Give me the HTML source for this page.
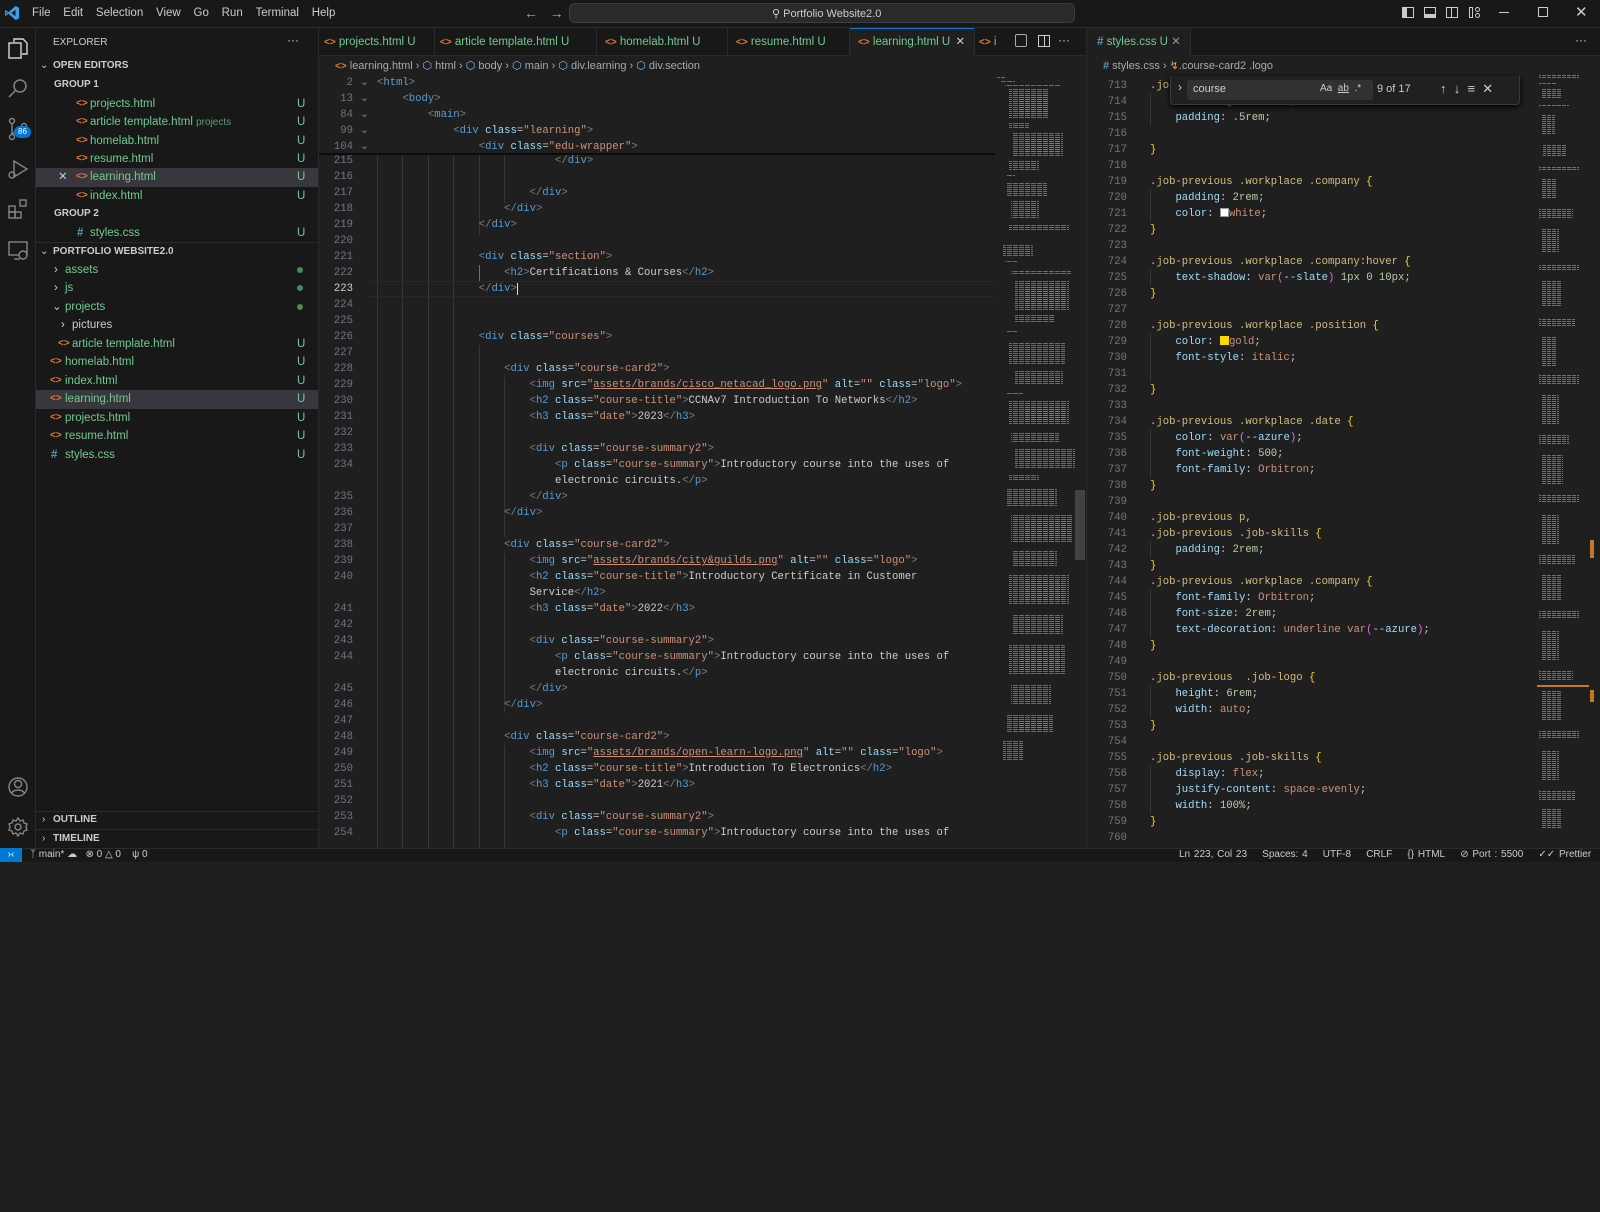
<!DOCTYPE html>
<html><head><meta charset="utf-8"><style>
*{box-sizing:border-box;margin:0;padding:0}
body{width:1600px;height:862px;overflow:hidden;background:#1f1f1f;font-family:"Liberation Sans",sans-serif;color:#ccc;position:relative}
.abs{position:absolute}
.ui{font-size:11.5px;white-space:nowrap}
.mono{font-family:"Liberation Mono",monospace;font-size:10.6px;white-space:pre}
.ln{position:absolute;height:16px;line-height:16px}
.num{position:absolute;text-align:right;color:#6e7681;width:40px}
.t{color:#569cd6}.b{color:#808080}.a{color:#9cdcfe}.s{color:#ce9178}.x{color:#cccccc}
.sel{color:#d7ba7d}.p{color:#9cdcfe}.v{color:#ce9178}.n{color:#b5cea8}.y{color:#ffd700}.pu{color:#da70d6}
.u{text-decoration:underline}
.g{color:#73c991}.fi{color:#e37933;font-weight:bold;font-size:10px}
.css{color:#519aba;font-weight:bold}
.row{position:absolute;left:36px;width:282px;height:18px;line-height:18px}
.hd{font-weight:bold;font-size:10px;color:#ccc}
.guide{position:absolute;width:1px;background:#363636}
.tab{position:absolute;top:0;height:28px;border-right:1px solid #2b2b2b;line-height:28px;overflow:hidden}
</style></head><body>

<!-- title bar -->
<div class="abs" style="left:0;top:0;width:1600px;height:28px;background:#181818;border-bottom:1px solid #2b2b2b"></div>
<svg class="abs" style="left:4px;top:5px" width="16" height="16" viewBox="0 0 16 16"><path d="M11.5 1 L15 2.6 V13.4 L11.5 15 L4.5 8.8 L1.8 10.9 L1 10.5 V5.5 L1.8 5.1 L4.5 7.2 Z M11.5 4.8 L7.4 8 L11.5 11.2 Z M2.3 6.8 V9.2 L3.6 8 Z" fill="#3c9ee8"/></svg>
<div class="abs ui" style="left:32px;top:7px;font-size:11.5px;color:#ccc">File&nbsp;&nbsp;&nbsp;&nbsp;Edit&nbsp;&nbsp;&nbsp;&nbsp;Selection&nbsp;&nbsp;&nbsp;&nbsp;View&nbsp;&nbsp;&nbsp;&nbsp;Go&nbsp;&nbsp;&nbsp;&nbsp;Run&nbsp;&nbsp;&nbsp;&nbsp;Terminal&nbsp;&nbsp;&nbsp;&nbsp;Help</div>
<div class="abs" style="left:524px;top:5px;color:#aaa;font-size:14px">&#8592;&nbsp;&nbsp;&nbsp;&#8594;</div>
<div class="abs" style="left:569px;top:3px;width:506px;height:20px;background:#2a2a2a;border:1px solid #3c3c3c;border-radius:6px"></div>
<div class="abs ui" style="left:772px;top:7px;font-size:11px;color:#ccc">&#9906; Portfolio Website2.0</div>
<div class="abs" style="left:1402px;top:7px;width:12px;height:11px;border:1px solid #ccc"></div>
<div class="abs" style="left:1402px;top:7px;width:5px;height:11px;background:#ccc"></div>
<div class="abs" style="left:1424px;top:7px;width:12px;height:11px;border:1px solid #ccc;border-bottom-width:4px"></div>
<div class="abs" style="left:1446px;top:7px;width:12px;height:11px;border:1px solid #ccc"></div>
<div class="abs" style="left:1451px;top:7px;width:1px;height:11px;background:#ccc"></div>
<div class="abs" style="left:1469px;top:7px;width:4px;height:11px;border:1px solid #ccc"></div>
<div class="abs" style="left:1475px;top:7px;width:5px;height:5px;border:1px solid #ccc;border-radius:3px"></div>
<div class="abs" style="left:1475px;top:13px;width:5px;height:5px;border:1px solid #ccc;border-radius:3px"></div>
<div class="abs" style="left:1499px;top:12px;width:10px;height:1px;background:#ccc"></div>
<div class="abs" style="left:1538px;top:7px;width:10px;height:10px;border:1px solid #ccc"></div>
<div class="abs" style="left:1575px;top:3px;color:#ccc;font-size:15px">&#10005;</div>

<!-- activity bar -->
<div class="abs" style="left:0;top:28px;width:36px;height:820px;background:#181818;border-right:1px solid #2b2b2b"></div>
<svg class="abs" style="left:6px;top:36px" width="24" height="24" viewBox="0 0 24 24" fill="none" stroke="#d7d7d7" stroke-width="1.4"><path d="M8 6V3h9l4 4v11h-5"/><rect x="3" y="7" width="12" height="15"/></svg>
<svg class="abs" style="left:6px;top:77px" width="24" height="24" viewBox="0 0 24 24" fill="none" stroke="#858585" stroke-width="1.5"><circle cx="14" cy="9" r="6"/><path d="M10 13L3 20"/></svg>
<svg class="abs" style="left:6px;top:117px" width="24" height="24" viewBox="0 0 24 24" fill="none" stroke="#858585" stroke-width="1.4"><circle cx="6" cy="4" r="2.5"/><circle cx="6" cy="20" r="2.5"/><circle cx="18" cy="9" r="2.5"/><path d="M6 6.5v11M18 11.5c0 4-12 3-12 6"/></svg>
<div class="abs" style="left:14px;top:126px;width:17px;height:12px;border-radius:7px;background:#0078d4;color:#fff;font-size:8px;text-align:center;line-height:12px">86</div>
<svg class="abs" style="left:6px;top:157px" width="24" height="24" viewBox="0 0 24 24" fill="none" stroke="#858585" stroke-width="1.4"><path d="M8 4l13 8-13 8z"/><circle cx="6" cy="18" r="3"/></svg>
<svg class="abs" style="left:6px;top:197px" width="24" height="24" viewBox="0 0 24 24" fill="none" stroke="#858585" stroke-width="1.4"><rect x="3" y="9" width="6" height="6"/><rect x="3" y="15" width="6" height="6"/><rect x="9" y="15" width="6" height="6"/><rect x="14" y="3" width="6" height="6"/></svg>
<svg class="abs" style="left:6px;top:238px" width="24" height="24" viewBox="0 0 24 24" fill="none" stroke="#858585" stroke-width="1.4"><rect x="3" y="4" width="18" height="13"/><path d="M8 21h6"/><circle cx="17" cy="17" r="4" fill="#181818"/></svg>
<svg class="abs" style="left:6px;top:775px" width="24" height="24" viewBox="0 0 24 24" fill="none" stroke="#858585" stroke-width="1.4"><circle cx="12" cy="12" r="9"/><circle cx="12" cy="9" r="3.5"/><path d="M5.5 18c3-4 10-4 13 0"/></svg>
<svg class="abs" style="left:6px;top:815px" width="24" height="24" viewBox="0 0 24 24" fill="none" stroke="#858585" stroke-width="1.4"><circle cx="12" cy="12" r="3"/><path d="M12 3l2 3 3-1 1 3 3 1-1 3 1 3-3 1-1 3-3-1-2 3-2-3-3 1-1-3-3-1 1-3-1-3 3-1 1-3 3 1z"/></svg>

<!-- sidebar -->
<div class="abs" style="left:36px;top:28px;width:283px;height:820px;background:#181818;border-right:1px solid #2b2b2b"></div>
<div class="abs ui" style="left:53px;top:37px;font-size:10px;color:#ccc">EXPLORER</div>
<div class="abs" style="left:287px;top:33px;color:#ccc;font-size:12px">&middot;&middot;&middot;</div>
<div class="row ui hd" style="top:57px"><span style="position:absolute;left:4px;font-weight:normal">&#8964;</span><span style="position:absolute;left:17px">OPEN EDITORS</span></div>
<div class="row ui hd" style="top:76px"><span style="position:absolute;left:18px">GROUP 1</span></div>
<div class="row ui" style="top:95px"><span class="fi abs" style="left:40px">&lt;&gt;</span><span class="g abs" style="left:54px">projects.html</span><span class="g abs" style="left:261px">U</span></div>
<div class="row ui" style="top:113px"><span class="fi abs" style="left:40px">&lt;&gt;</span><span class="g abs" style="left:54px">article template.html <span style="font-size:10px;color:#5c9d6f">projects</span></span><span class="g abs" style="left:261px">U</span></div>
<div class="row ui" style="top:132px"><span class="fi abs" style="left:40px">&lt;&gt;</span><span class="g abs" style="left:54px">homelab.html</span><span class="g abs" style="left:261px">U</span></div>
<div class="row ui" style="top:150px"><span class="fi abs" style="left:40px">&lt;&gt;</span><span class="g abs" style="left:54px">resume.html</span><span class="g abs" style="left:261px">U</span></div>
<div class="row ui" style="top:168px;background:#37373d;height:19px"><span class="abs" style="left:22px;color:#ccc">&#10005;</span><span class="fi abs" style="left:40px">&lt;&gt;</span><span class="g abs" style="left:54px">learning.html</span><span class="g abs" style="left:261px">U</span></div>
<div class="row ui" style="top:187px"><span class="fi abs" style="left:40px">&lt;&gt;</span><span class="g abs" style="left:54px">index.html</span><span class="g abs" style="left:261px">U</span></div>
<div class="row ui hd" style="top:205px"><span style="position:absolute;left:18px">GROUP 2</span></div>
<div class="row ui" style="top:224px"><span class="css abs" style="left:41px">#</span><span class="g abs" style="left:54px">styles.css</span><span class="g abs" style="left:261px">U</span></div>
<div class="abs" style="left:36px;top:242px;width:282px;height:1px;background:#2b2b2b"></div>
<div class="row ui hd" style="top:243px"><span style="position:absolute;left:4px;font-weight:normal">&#8964;</span><span style="position:absolute;left:17px">PORTFOLIO WEBSITE2.0</span></div>
<div class="row ui" style="top:261px"><span class="abs" style="left:18px">&#8250;</span><span class="g abs" style="left:29px">assets</span><span class="abs" style="left:261px;top:6px;width:6px;height:6px;border-radius:3px;background:#4b8a5a"></span></div>
<div class="row ui" style="top:279px"><span class="abs" style="left:18px">&#8250;</span><span class="g abs" style="left:29px">js</span><span class="abs" style="left:261px;top:6px;width:6px;height:6px;border-radius:3px;background:#4b8a5a"></span></div>
<div class="row ui" style="top:298px"><span class="abs" style="left:16px">&#8964;</span><span class="g abs" style="left:29px">projects</span><span class="abs" style="left:261px;top:6px;width:6px;height:6px;border-radius:3px;background:#4b8a5a"></span></div>
<div class="row ui" style="top:316px"><span class="abs" style="left:25px">&#8250;</span><span class="abs" style="left:36px;color:#ccc">pictures</span></div>
<div class="row ui" style="top:335px"><span class="fi abs" style="left:22px">&lt;&gt;</span><span class="g abs" style="left:36px">article template.html</span><span class="g abs" style="left:261px">U</span></div>
<div class="row ui" style="top:353px"><span class="fi abs" style="left:14px">&lt;&gt;</span><span class="g abs" style="left:29px">homelab.html</span><span class="g abs" style="left:261px">U</span></div>
<div class="row ui" style="top:372px"><span class="fi abs" style="left:14px">&lt;&gt;</span><span class="g abs" style="left:29px">index.html</span><span class="g abs" style="left:261px">U</span></div>
<div class="row ui" style="top:390px;background:#37373d;height:19px"><span class="fi abs" style="left:14px">&lt;&gt;</span><span class="g abs" style="left:29px">learning.html</span><span class="g abs" style="left:261px">U</span></div>
<div class="row ui" style="top:409px"><span class="fi abs" style="left:14px">&lt;&gt;</span><span class="g abs" style="left:29px">projects.html</span><span class="g abs" style="left:261px">U</span></div>
<div class="row ui" style="top:427px"><span class="fi abs" style="left:14px">&lt;&gt;</span><span class="g abs" style="left:29px">resume.html</span><span class="g abs" style="left:261px">U</span></div>
<div class="row ui" style="top:446px"><span class="css abs" style="left:15px">#</span><span class="g abs" style="left:29px">styles.css</span><span class="g abs" style="left:261px">U</span></div>
<div class="abs" style="left:36px;top:811px;width:282px;height:1px;background:#2b2b2b"></div>
<div class="row ui hd" style="top:811px"><span style="position:absolute;left:6px;font-weight:normal">&#8250;</span><span style="position:absolute;left:17px">OUTLINE</span></div>
<div class="abs" style="left:36px;top:829px;width:282px;height:1px;background:#2b2b2b"></div>
<div class="row ui hd" style="top:830px"><span style="position:absolute;left:6px;font-weight:normal">&#8250;</span><span style="position:absolute;left:17px">TIMELINE</span></div>

<!-- left editor tabs -->
<div class="abs" style="left:319px;top:28px;width:767px;height:28px;background:#181818;border-bottom:1px solid #2b2b2b"></div>
<div class="abs ui" style="left:319px;top:28px;width:767px;height:28px">
 <div class="tab" style="left:0;width:116px"><span class="fi" style="margin-left:5px">&lt;&gt;</span> <span class="g">projects.html U</span></div>
 <div class="tab" style="left:116px;width:162px"><span class="fi" style="margin-left:5px">&lt;&gt;</span> <span class="g">article template.html U</span></div>
 <div class="tab" style="left:278px;width:131px"><span class="fi" style="margin-left:8px">&lt;&gt;</span> <span class="g">homelab.html U</span></div>
 <div class="tab" style="left:409px;width:122px"><span class="fi" style="margin-left:8px">&lt;&gt;</span> <span class="g">resume.html U</span></div>
 <div class="tab" style="left:531px;width:125px;height:29px;background:#1f1f1f;border-top:1px solid #0078d4;line-height:27px"><span class="fi" style="margin-left:8px">&lt;&gt;</span> <span class="g">learning.html U</span> <span style="color:#ccc;margin-left:2px">&#10005;</span></div>
 <div class="tab" style="left:656px;width:22px;border:none"><span class="fi" style="margin-left:4px">&lt;&gt;</span> <span class="g">ir</span></div>
</div>
<div class="abs" style="left:1015px;top:34px;width:12px;height:13px;border:1px solid #aaa;border-radius:2px"></div>
<div class="abs" style="left:1038px;top:35px;width:12px;height:12px;border:1px solid #ccc"></div>
<div class="abs" style="left:1044px;top:35px;width:1px;height:12px;background:#ccc"></div>
<div class="abs" style="left:1058px;top:33px;color:#ccc;font-size:12px">&middot;&middot;&middot;</div>

<!-- left breadcrumbs -->
<div class="abs ui" style="left:335px;top:59px;font-size:11px;color:#a9a9a9"><span class="fi">&lt;&gt;</span> learning.html &#8250; <span style="color:#75beff">&#11041;</span> html &#8250; <span style="color:#75beff">&#11041;</span> body &#8250; <span style="color:#75beff">&#11041;</span> main &#8250; <span style="color:#75beff">&#11041;</span> div.learning &#8250; <span style="color:#75beff">&#11041;</span> div.section</div>

<!-- left code guides -->
<div class="guide" style="left:377px;top:155px;height:693px"></div>
<div class="guide" style="left:402px;top:155px;height:693px"></div>
<div class="guide" style="left:428px;top:155px;height:693px"></div>
<div class="guide" style="left:453px;top:155px;height:693px"></div>
<div class="guide" style="left:479px;top:155px;height:80px"></div>
<div class="guide" style="left:504px;top:155px;height:48px"></div>
<div class="guide" style="left:479px;top:265px;height:16px;background:#707070"></div>
<div class="guide" style="left:479px;top:345px;height:503px"></div>
<div class="guide" style="left:504px;top:377px;height:160px"></div>
<div class="guide" style="left:504px;top:553px;height:160px"></div>
<div class="guide" style="left:504px;top:745px;height:103px"></div>
<div class="abs" style="left:370px;top:281px;width:625px;height:16px;border-top:1px solid #282828;border-bottom:1px solid #282828"></div>

<div class="mono">
<div class="abs" style="left:319px;top:75px;width:676px;height:80px;background:#1f1f1f;border-bottom:2px solid #0b0b0b"></div>
<div class="ln" style="top:75px;left:0"><span class="num" style="left:313px">2</span><span class="abs b" style="left:360px">&#8964;</span><span class="abs" style="left:377px"><span class="b">&lt;</span><span class="t">html</span><span class="b">&gt;</span></span></div>
<div class="ln" style="top:91px;left:0"><span class="num" style="left:313px">13</span><span class="abs b" style="left:360px">&#8964;</span><span class="abs" style="left:377px">    <span class="b">&lt;</span><span class="t">body</span><span class="b">&gt;</span></span></div>
<div class="ln" style="top:107px;left:0"><span class="num" style="left:313px">84</span><span class="abs b" style="left:360px">&#8964;</span><span class="abs" style="left:377px">        <span class="b">&lt;</span><span class="t">main</span><span class="b">&gt;</span></span></div>
<div class="ln" style="top:123px;left:0"><span class="num" style="left:313px">99</span><span class="abs b" style="left:360px">&#8964;</span><span class="abs" style="left:377px">            <span class="b">&lt;</span><span class="t">div</span> <span class="a">class</span><span class="x">=</span><span class="s">"learning"</span><span class="b">&gt;</span></span></div>
<div class="ln" style="top:139px;left:0"><span class="num" style="left:313px">104</span><span class="abs b" style="left:360px">&#8964;</span><span class="abs" style="left:377px">                <span class="b">&lt;</span><span class="t">div</span> <span class="a">class</span><span class="x">=</span><span class="s">"edu-wrapper"</span><span class="b">&gt;</span></span></div>
</div>

<div class="mono">
<div class="ln" style="top:153px"><span class="num" style="left:313px">215</span><span class="abs" style="left:377px">                            <span class="b">&lt;/</span><span class="t">div</span><span class="b">&gt;</span></span></div>
<div class="ln" style="top:169px"><span class="num" style="left:313px">216</span></div>
<div class="ln" style="top:185px"><span class="num" style="left:313px">217</span><span class="abs" style="left:377px">                        <span class="b">&lt;/</span><span class="t">div</span><span class="b">&gt;</span></span></div>
<div class="ln" style="top:201px"><span class="num" style="left:313px">218</span><span class="abs" style="left:377px">                    <span class="b">&lt;/</span><span class="t">div</span><span class="b">&gt;</span></span></div>
<div class="ln" style="top:217px"><span class="num" style="left:313px">219</span><span class="abs" style="left:377px">                <span class="b">&lt;/</span><span class="t">div</span><span class="b">&gt;</span></span></div>
<div class="ln" style="top:233px"><span class="num" style="left:313px">220</span></div>
<div class="ln" style="top:249px"><span class="num" style="left:313px">221</span><span class="abs" style="left:377px">                <span class="b">&lt;</span><span class="t">div</span> <span class="a">class</span><span class="x">=</span><span class="s">"section"</span><span class="b">&gt;</span></span></div>
<div class="ln" style="top:265px"><span class="num" style="left:313px">222</span><span class="abs" style="left:377px">                    <span class="b">&lt;</span><span class="t">h2</span><span class="b">&gt;</span><span class="x">Certifications &amp; Courses</span><span class="b">&lt;/</span><span class="t">h2</span><span class="b">&gt;</span></span></div>
<div class="ln" style="top:281px"><span class="num" style="left:313px;color:#ccc">223</span><span class="abs" style="left:377px">                <span class="b">&lt;/</span><span class="t">div</span><span class="b">&gt;</span><span style="border-left:1px solid #ddd"></span></span></div>
<div class="ln" style="top:297px"><span class="num" style="left:313px">224</span></div>
<div class="ln" style="top:313px"><span class="num" style="left:313px">225</span></div>
<div class="ln" style="top:329px"><span class="num" style="left:313px">226</span><span class="abs" style="left:377px">                <span class="b">&lt;</span><span class="t">div</span> <span class="a">class</span><span class="x">=</span><span class="s">"courses"</span><span class="b">&gt;</span></span></div>
<div class="ln" style="top:345px"><span class="num" style="left:313px">227</span></div>
<div class="ln" style="top:361px"><span class="num" style="left:313px">228</span><span class="abs" style="left:377px">                    <span class="b">&lt;</span><span class="t">div</span> <span class="a">class</span><span class="x">=</span><span class="s">"course-card2"</span><span class="b">&gt;</span></span></div>
<div class="ln" style="top:377px"><span class="num" style="left:313px">229</span><span class="abs" style="left:377px">                        <span class="b">&lt;</span><span class="t">img</span> <span class="a">src</span><span class="x">=</span><span class="s">"<span class="u">assets/brands/cisco_netacad_logo.png</span>"</span> <span class="a">alt</span><span class="x">=</span><span class="s">""</span> <span class="a">class</span><span class="x">=</span><span class="s">"logo"</span><span class="b">&gt;</span></span></div>
<div class="ln" style="top:393px"><span class="num" style="left:313px">230</span><span class="abs" style="left:377px">                        <span class="b">&lt;</span><span class="t">h2</span> <span class="a">class</span><span class="x">=</span><span class="s">"course-title"</span><span class="b">&gt;</span><span class="x">CCNAv7 Introduction To Networks</span><span class="b">&lt;/</span><span class="t">h2</span><span class="b">&gt;</span></span></div>
<div class="ln" style="top:409px"><span class="num" style="left:313px">231</span><span class="abs" style="left:377px">                        <span class="b">&lt;</span><span class="t">h3</span> <span class="a">class</span><span class="x">=</span><span class="s">"date"</span><span class="b">&gt;</span><span class="x">2023</span><span class="b">&lt;/</span><span class="t">h3</span><span class="b">&gt;</span></span></div>
<div class="ln" style="top:425px"><span class="num" style="left:313px">232</span></div>
<div class="ln" style="top:441px"><span class="num" style="left:313px">233</span><span class="abs" style="left:377px">                        <span class="b">&lt;</span><span class="t">div</span> <span class="a">class</span><span class="x">=</span><span class="s">"course-summary2"</span><span class="b">&gt;</span></span></div>
<div class="ln" style="top:457px"><span class="num" style="left:313px">234</span><span class="abs" style="left:377px">                            <span class="b">&lt;</span><span class="t">p</span> <span class="a">class</span><span class="x">=</span><span class="s">"course-summary"</span><span class="b">&gt;</span><span class="x">Introductory course into the uses of</span></span></div>
<div class="ln" style="top:473px"><span class="abs" style="left:377px">                            <span class="x">electronic circuits.</span><span class="b">&lt;/</span><span class="t">p</span><span class="b">&gt;</span></span></div>
<div class="ln" style="top:489px"><span class="num" style="left:313px">235</span><span class="abs" style="left:377px">                        <span class="b">&lt;/</span><span class="t">div</span><span class="b">&gt;</span></span></div>
<div class="ln" style="top:505px"><span class="num" style="left:313px">236</span><span class="abs" style="left:377px">                    <span class="b">&lt;/</span><span class="t">div</span><span class="b">&gt;</span></span></div>
<div class="ln" style="top:521px"><span class="num" style="left:313px">237</span></div>
<div class="ln" style="top:537px"><span class="num" style="left:313px">238</span><span class="abs" style="left:377px">                    <span class="b">&lt;</span><span class="t">div</span> <span class="a">class</span><span class="x">=</span><span class="s">"course-card2"</span><span class="b">&gt;</span></span></div>
<div class="ln" style="top:553px"><span class="num" style="left:313px">239</span><span class="abs" style="left:377px">                        <span class="b">&lt;</span><span class="t">img</span> <span class="a">src</span><span class="x">=</span><span class="s">"<span class="u">assets/brands/city&amp;guilds.png</span>"</span> <span class="a">alt</span><span class="x">=</span><span class="s">""</span> <span class="a">class</span><span class="x">=</span><span class="s">"logo"</span><span class="b">&gt;</span></span></div>
<div class="ln" style="top:569px"><span class="num" style="left:313px">240</span><span class="abs" style="left:377px">                        <span class="b">&lt;</span><span class="t">h2</span> <span class="a">class</span><span class="x">=</span><span class="s">"course-title"</span><span class="b">&gt;</span><span class="x">Introductory Certificate in Customer</span></span></div>
<div class="ln" style="top:585px"><span class="abs" style="left:377px">                        <span class="x">Service</span><span class="b">&lt;/</span><span class="t">h2</span><span class="b">&gt;</span></span></div>
<div class="ln" style="top:601px"><span class="num" style="left:313px">241</span><span class="abs" style="left:377px">                        <span class="b">&lt;</span><span class="t">h3</span> <span class="a">class</span><span class="x">=</span><span class="s">"date"</span><span class="b">&gt;</span><span class="x">2022</span><span class="b">&lt;/</span><span class="t">h3</span><span class="b">&gt;</span></span></div>
<div class="ln" style="top:617px"><span class="num" style="left:313px">242</span></div>
<div class="ln" style="top:633px"><span class="num" style="left:313px">243</span><span class="abs" style="left:377px">                        <span class="b">&lt;</span><span class="t">div</span> <span class="a">class</span><span class="x">=</span><span class="s">"course-summary2"</span><span class="b">&gt;</span></span></div>
<div class="ln" style="top:649px"><span class="num" style="left:313px">244</span><span class="abs" style="left:377px">                            <span class="b">&lt;</span><span class="t">p</span> <span class="a">class</span><span class="x">=</span><span class="s">"course-summary"</span><span class="b">&gt;</span><span class="x">Introductory course into the uses of</span></span></div>
<div class="ln" style="top:665px"><span class="abs" style="left:377px">                            <span class="x">electronic circuits.</span><span class="b">&lt;/</span><span class="t">p</span><span class="b">&gt;</span></span></div>
<div class="ln" style="top:681px"><span class="num" style="left:313px">245</span><span class="abs" style="left:377px">                        <span class="b">&lt;/</span><span class="t">div</span><span class="b">&gt;</span></span></div>
<div class="ln" style="top:697px"><span class="num" style="left:313px">246</span><span class="abs" style="left:377px">                    <span class="b">&lt;/</span><span class="t">div</span><span class="b">&gt;</span></span></div>
<div class="ln" style="top:713px"><span class="num" style="left:313px">247</span></div>
<div class="ln" style="top:729px"><span class="num" style="left:313px">248</span><span class="abs" style="left:377px">                    <span class="b">&lt;</span><span class="t">div</span> <span class="a">class</span><span class="x">=</span><span class="s">"course-card2"</span><span class="b">&gt;</span></span></div>
<div class="ln" style="top:745px"><span class="num" style="left:313px">249</span><span class="abs" style="left:377px">                        <span class="b">&lt;</span><span class="t">img</span> <span class="a">src</span><span class="x">=</span><span class="s">"<span class="u">assets/brands/open-learn-logo.png</span>"</span> <span class="a">alt</span><span class="x">=</span><span class="s">""</span> <span class="a">class</span><span class="x">=</span><span class="s">"logo"</span><span class="b">&gt;</span></span></div>
<div class="ln" style="top:761px"><span class="num" style="left:313px">250</span><span class="abs" style="left:377px">                        <span class="b">&lt;</span><span class="t">h2</span> <span class="a">class</span><span class="x">=</span><span class="s">"course-title"</span><span class="b">&gt;</span><span class="x">Introduction To Electronics</span><span class="b">&lt;/</span><span class="t">h2</span><span class="b">&gt;</span></span></div>
<div class="ln" style="top:777px"><span class="num" style="left:313px">251</span><span class="abs" style="left:377px">                        <span class="b">&lt;</span><span class="t">h3</span> <span class="a">class</span><span class="x">=</span><span class="s">"date"</span><span class="b">&gt;</span><span class="x">2021</span><span class="b">&lt;/</span><span class="t">h3</span><span class="b">&gt;</span></span></div>
<div class="ln" style="top:793px"><span class="num" style="left:313px">252</span></div>
<div class="ln" style="top:809px"><span class="num" style="left:313px">253</span><span class="abs" style="left:377px">                        <span class="b">&lt;</span><span class="t">div</span> <span class="a">class</span><span class="x">=</span><span class="s">"course-summary2"</span><span class="b">&gt;</span></span></div>
<div class="ln" style="top:825px"><span class="num" style="left:313px">254</span><span class="abs" style="left:377px">                            <span class="b">&lt;</span><span class="t">p</span> <span class="a">class</span><span class="x">=</span><span class="s">"course-summary"</span><span class="b">&gt;</span><span class="x">Introductory course into the uses of</span></span></div>
<div class="ln" style="top:841px;height:7px;overflow:hidden"><span class="abs" style="left:377px;top:-4px">                            <span class="x">electronic circuits.</span><span class="b">&lt;/</span><span class="t">p</span><span class="b">&gt;</span></span></div>
</div>

<!-- left minimap -->
<svg class="abs" style="left:995px;top:75px" width="80" height="700" viewBox="0 0 80 700">
<defs>
<pattern id="pb" width="6" height="2" patternUnits="userSpaceOnUse"><rect width="5" height="1" fill="#5f86aa"/></pattern>
<pattern id="po" width="6" height="2" patternUnits="userSpaceOnUse"><rect width="5" height="1" fill="#b0704f"/></pattern>
</defs>
<g fill="url(#pb)" opacity=".8">
<rect x="2" y="2" width="8" height="1"/><rect x="6" y="6" width="14" height="1"/><rect x="10" y="10" width="55" height="2"/><rect x="14" y="14" width="40" height="30"/><rect x="14" y="48" width="20" height="6"/><rect x="18" y="58" width="50" height="24"/><rect x="14" y="86" width="30" height="10"/>
<rect x="12" y="100" width="8" height="2"/><rect x="12" y="108" width="40" height="14"/><rect x="16" y="126" width="28" height="18"/><rect x="14" y="150" width="60" height="6"/><rect x="8" y="170" width="30" height="12"/><rect x="10" y="186" width="12" height="2"/>
<rect x="16" y="196" width="60" height="4"/><rect x="20" y="206" width="54" height="30"/><rect x="20" y="240" width="40" height="8"/><rect x="12" y="256" width="10" height="2"/><rect x="14" y="268" width="56" height="22"/><rect x="20" y="296" width="48" height="14"/>
<rect x="12" y="318" width="16" height="2"/><rect x="14" y="326" width="60" height="24"/><rect x="16" y="358" width="48" height="10"/><rect x="20" y="374" width="60" height="20"/><rect x="14" y="400" width="30" height="6"/>
<rect x="12" y="414" width="50" height="18"/><rect x="16" y="440" width="62" height="28"/><rect x="18" y="476" width="44" height="16"/><rect x="14" y="500" width="60" height="30"/><rect x="18" y="540" width="50" height="20"/><rect x="14" y="570" width="56" height="30"/><rect x="16" y="610" width="40" height="20"/><rect x="12" y="640" width="46" height="18"/><rect x="8" y="666" width="20" height="20"/>
</g>
<g fill="url(#po)" opacity=".8"><rect x="24" y="20" width="30" height="20"/><rect x="30" y="64" width="36" height="14"/><rect x="30" y="212" width="40" height="20"/><rect x="30" y="332" width="40" height="14"/><rect x="28" y="446" width="46" height="18"/><rect x="28" y="506" width="40" height="20"/><rect x="26" y="576" width="40" height="20"/><rect x="24" y="646" width="30" height="10"/></g>
</svg>
<div class="abs" style="left:1075px;top:490px;width:10px;height:70px;background:#424242"></div>
<div class="abs" style="left:1086px;top:28px;width:1px;height:820px;background:#2b2b2b"></div>

<!-- right editor -->
<div class="abs" style="left:1087px;top:28px;width:513px;height:28px;background:#181818;border-bottom:1px solid #2b2b2b"></div>
<div class="abs ui" style="left:1087px;top:28px;width:104px;height:29px;background:#1f1f1f;border-right:1px solid #2b2b2b;line-height:28px"><span class="css" style="margin-left:10px">#</span> <span class="g">styles.css U</span> <span style="color:#999">&#10005;</span></div>
<div class="abs" style="left:1575px;top:33px;color:#ccc;font-size:12px">&middot;&middot;&middot;</div>
<div class="abs ui" style="left:1103px;top:59px;font-size:11px;color:#a9a9a9"><span class="css">#</span> styles.css &#8250; <span style="color:#e8a050">&#8623;</span>.course-card2 .logo</div>

<div class="guide" style="left:1150px;top:94px;height:32px"></div>
<div class="guide" style="left:1150px;top:190px;height:32px"></div>
<div class="guide" style="left:1150px;top:270px;height:16px"></div>
<div class="guide" style="left:1150px;top:334px;height:48px"></div>
<div class="guide" style="left:1150px;top:430px;height:48px"></div>
<div class="guide" style="left:1150px;top:542px;height:16px"></div>
<div class="guide" style="left:1150px;top:590px;height:48px"></div>
<div class="guide" style="left:1150px;top:686px;height:32px"></div>
<div class="guide" style="left:1150px;top:766px;height:48px"></div>

<div class="mono">
<div class="ln" style="top:78px"><span class="num" style="left:1087px">713</span><span class="abs sel" style="left:1150px">.job</span></div>
<div class="ln" style="top:94px"><span class="num" style="left:1087px">714</span><span class="abs" style="left:1150px">    <span class="p">text-align</span>: <span class="v">center</span>;</span></div>
<div class="ln" style="top:110px"><span class="num" style="left:1087px">715</span><span class="abs" style="left:1150px">    <span class="p">padding</span>: <span class="n">.5rem</span>;</span></div>
<div class="ln" style="top:126px"><span class="num" style="left:1087px">716</span></div>
<div class="ln" style="top:142px"><span class="num" style="left:1087px">717</span><span class="abs y" style="left:1150px">}</span></div>
<div class="ln" style="top:158px"><span class="num" style="left:1087px">718</span></div>
<div class="ln" style="top:174px"><span class="num" style="left:1087px">719</span><span class="abs" style="left:1150px"><span class="sel">.job-previous .workplace .company</span> <span class="y">{</span></span></div>
<div class="ln" style="top:190px"><span class="num" style="left:1087px">720</span><span class="abs" style="left:1150px">    <span class="p">padding</span>: <span class="n">2rem</span>;</span></div>
<div class="ln" style="top:206px"><span class="num" style="left:1087px">721</span><span class="abs" style="left:1150px">    <span class="p">color</span>: <span style="display:inline-block;width:9px;height:9px;background:#fff;border:1px solid #999;vertical-align:-1px"></span><span class="v">white</span>;</span></div>
<div class="ln" style="top:222px"><span class="num" style="left:1087px">722</span><span class="abs y" style="left:1150px">}</span></div>
<div class="ln" style="top:238px"><span class="num" style="left:1087px">723</span></div>
<div class="ln" style="top:254px"><span class="num" style="left:1087px">724</span><span class="abs" style="left:1150px"><span class="sel">.job-previous .workplace .company:hover</span> <span class="y">{</span></span></div>
<div class="ln" style="top:270px"><span class="num" style="left:1087px">725</span><span class="abs" style="left:1150px">    <span class="p">text-shadow</span>: <span class="v">var</span><span class="pu">(</span><span class="a">--slate</span><span class="pu">)</span> <span class="n">1px</span> <span class="n">0</span> <span class="n">10px</span>;</span></div>
<div class="ln" style="top:286px"><span class="num" style="left:1087px">726</span><span class="abs y" style="left:1150px">}</span></div>
<div class="ln" style="top:302px"><span class="num" style="left:1087px">727</span></div>
<div class="ln" style="top:318px"><span class="num" style="left:1087px">728</span><span class="abs" style="left:1150px"><span class="sel">.job-previous .workplace .position</span> <span class="y">{</span></span></div>
<div class="ln" style="top:334px"><span class="num" style="left:1087px">729</span><span class="abs" style="left:1150px">    <span class="p">color</span>: <span style="display:inline-block;width:9px;height:9px;background:#ffd700;vertical-align:-1px"></span><span class="v">gold</span>;</span></div>
<div class="ln" style="top:350px"><span class="num" style="left:1087px">730</span><span class="abs" style="left:1150px">    <span class="p">font-style</span>: <span class="v">italic</span>;</span></div>
<div class="ln" style="top:366px"><span class="num" style="left:1087px">731</span></div>
<div class="ln" style="top:382px"><span class="num" style="left:1087px">732</span><span class="abs y" style="left:1150px">}</span></div>
<div class="ln" style="top:398px"><span class="num" style="left:1087px">733</span></div>
<div class="ln" style="top:414px"><span class="num" style="left:1087px">734</span><span class="abs" style="left:1150px"><span class="sel">.job-previous .workplace .date</span> <span class="y">{</span></span></div>
<div class="ln" style="top:430px"><span class="num" style="left:1087px">735</span><span class="abs" style="left:1150px">    <span class="p">color</span>: <span class="v">var</span><span class="pu">(</span><span class="a">--azure</span><span class="pu">)</span>;</span></div>
<div class="ln" style="top:446px"><span class="num" style="left:1087px">736</span><span class="abs" style="left:1150px">    <span class="p">font-weight</span>: <span class="n">500</span>;</span></div>
<div class="ln" style="top:462px"><span class="num" style="left:1087px">737</span><span class="abs" style="left:1150px">    <span class="p">font-family</span>: <span class="v">Orbitron</span>;</span></div>
<div class="ln" style="top:478px"><span class="num" style="left:1087px">738</span><span class="abs y" style="left:1150px">}</span></div>
<div class="ln" style="top:494px"><span class="num" style="left:1087px">739</span></div>
<div class="ln" style="top:510px"><span class="num" style="left:1087px">740</span><span class="abs" style="left:1150px"><span class="sel">.job-previous p</span>,</span></div>
<div class="ln" style="top:526px"><span class="num" style="left:1087px">741</span><span class="abs" style="left:1150px"><span class="sel">.job-previous .job-skills</span> <span class="y">{</span></span></div>
<div class="ln" style="top:542px"><span class="num" style="left:1087px">742</span><span class="abs" style="left:1150px">    <span class="p">padding</span>: <span class="n">2rem</span>;</span></div>
<div class="ln" style="top:558px"><span class="num" style="left:1087px">743</span><span class="abs y" style="left:1150px">}</span></div>
<div class="ln" style="top:574px"><span class="num" style="left:1087px">744</span><span class="abs" style="left:1150px"><span class="sel">.job-previous .workplace .company</span> <span class="y">{</span></span></div>
<div class="ln" style="top:590px"><span class="num" style="left:1087px">745</span><span class="abs" style="left:1150px">    <span class="p">font-family</span>: <span class="v">Orbitron</span>;</span></div>
<div class="ln" style="top:606px"><span class="num" style="left:1087px">746</span><span class="abs" style="left:1150px">    <span class="p">font-size</span>: <span class="n">2rem</span>;</span></div>
<div class="ln" style="top:622px"><span class="num" style="left:1087px">747</span><span class="abs" style="left:1150px">    <span class="p">text-decoration</span>: <span class="v">underline</span> <span class="v">var</span><span class="pu">(</span><span class="a">--azure</span><span class="pu">)</span>;</span></div>
<div class="ln" style="top:638px"><span class="num" style="left:1087px">748</span><span class="abs y" style="left:1150px">}</span></div>
<div class="ln" style="top:654px"><span class="num" style="left:1087px">749</span></div>
<div class="ln" style="top:670px"><span class="num" style="left:1087px">750</span><span class="abs" style="left:1150px"><span class="sel">.job-previous  .job-logo</span> <span class="y">{</span></span></div>
<div class="ln" style="top:686px"><span class="num" style="left:1087px">751</span><span class="abs" style="left:1150px">    <span class="p">height</span>: <span class="n">6rem</span>;</span></div>
<div class="ln" style="top:702px"><span class="num" style="left:1087px">752</span><span class="abs" style="left:1150px">    <span class="p">width</span>: <span class="v">auto</span>;</span></div>
<div class="ln" style="top:718px"><span class="num" style="left:1087px">753</span><span class="abs y" style="left:1150px">}</span></div>
<div class="ln" style="top:734px"><span class="num" style="left:1087px">754</span></div>
<div class="ln" style="top:750px"><span class="num" style="left:1087px">755</span><span class="abs" style="left:1150px"><span class="sel">.job-previous .job-skills</span> <span class="y">{</span></span></div>
<div class="ln" style="top:766px"><span class="num" style="left:1087px">756</span><span class="abs" style="left:1150px">    <span class="p">display</span>: <span class="v">flex</span>;</span></div>
<div class="ln" style="top:782px"><span class="num" style="left:1087px">757</span><span class="abs" style="left:1150px">    <span class="p">justify-content</span>: <span class="v">space-evenly</span>;</span></div>
<div class="ln" style="top:798px"><span class="num" style="left:1087px">758</span><span class="abs" style="left:1150px">    <span class="p">width</span>: <span class="n">100%</span>;</span></div>
<div class="ln" style="top:814px"><span class="num" style="left:1087px">759</span><span class="abs y" style="left:1150px">}</span></div>
<div class="ln" style="top:830px"><span class="num" style="left:1087px">760</span></div>
</div>

<!-- find widget -->
<div class="abs" style="left:1170px;top:76px;width:350px;height:29px;background:#202020;border:1px solid #3a3a3a;border-top:none;box-shadow:0 2px 6px #000;border-radius:0 0 4px 4px"></div>
<div class="abs" style="left:1178px;top:80px;color:#ccc;font-size:12px">&#8250;</div>
<div class="abs" style="left:1187px;top:80px;width:186px;height:20px;background:#313131;border-radius:3px"></div>
<div class="abs ui" style="left:1193px;top:83px;font-size:11px;color:#ccc">course</div>
<div class="abs ui" style="left:1320px;top:83px;font-size:10px;color:#ccc">Aa&nbsp;&nbsp;<u>ab</u>&nbsp;&nbsp;.*</div>
<div class="abs ui" style="left:1377px;top:83px;font-size:11px;color:#ccc">9 of 17</div>
<div class="abs ui" style="left:1440px;top:81px;font-size:13px;color:#ccc">&#8593;&nbsp;&nbsp;&#8595;&nbsp;&nbsp;&#8801;&nbsp;&nbsp;&#10005;</div>

<!-- right minimap -->
<svg class="abs" style="left:1537px;top:75px" width="52" height="760" viewBox="0 0 52 760">
<defs>
<pattern id="rb" width="5" height="2" patternUnits="userSpaceOnUse"><rect width="4" height="1" fill="#5f86aa"/></pattern>
</defs>
<g fill="url(#rb)" opacity=".85">
<rect x="2" y="0" width="40" height="3"/><rect x="2" y="8" width="18" height="2"/><rect x="4" y="14" width="20" height="10"/><rect x="2" y="30" width="30" height="2"/><rect x="4" y="40" width="14" height="20"/><rect x="6" y="70" width="24" height="12"/><rect x="2" y="92" width="40" height="4"/><rect x="4" y="104" width="16" height="20"/>
<rect x="2" y="134" width="34" height="10"/><rect x="4" y="154" width="18" height="24"/><rect x="2" y="190" width="40" height="6"/><rect x="4" y="206" width="20" height="26"/><rect x="2" y="244" width="36" height="8"/><rect x="4" y="262" width="16" height="30"/><rect x="2" y="300" width="40" height="10"/><rect x="4" y="320" width="18" height="30"/>
<rect x="2" y="360" width="30" height="10"/><rect x="4" y="380" width="22" height="30"/><rect x="2" y="420" width="40" height="8"/><rect x="4" y="440" width="18" height="30"/><rect x="2" y="480" width="36" height="10"/><rect x="4" y="500" width="20" height="26"/><rect x="2" y="536" width="40" height="8"/><rect x="4" y="556" width="18" height="30"/>
<rect x="2" y="596" width="34" height="10"/><rect x="4" y="616" width="20" height="30"/><rect x="2" y="656" width="40" height="8"/><rect x="4" y="676" width="18" height="30"/><rect x="2" y="716" width="36" height="10"/><rect x="4" y="734" width="20" height="20"/>
</g>
<rect x="0" y="610" width="52" height="2" fill="#c07a2a"/>
</svg>
<div class="abs" style="left:1590px;top:540px;width:4px;height:18px;background:#c07a2a"></div>
<div class="abs" style="left:1590px;top:690px;width:4px;height:12px;background:#c07a2a"></div>

<!-- status bar -->
<div class="abs" style="left:0;top:848px;width:1600px;height:14px;background:#181818;border-top:1px solid #2b2b2b"></div>
<div class="abs" style="left:0;top:848px;width:22px;height:14px;background:#0078d4;color:#fff;font-size:10px;text-align:center;line-height:14px">&#8250;&#8249;</div>
<div class="abs ui" style="left:30px;top:849px;font-size:10px;color:#ccc">&#5833; main* &#9729;&nbsp;&nbsp;&nbsp;&#8855; 0 &#9651; 0&nbsp;&nbsp;&nbsp;&nbsp;&#968; 0</div>
<div class="abs ui" style="left:1179px;top:849px;font-size:10px;color:#ccc;word-spacing:1px">Ln 223, Col 23&nbsp;&nbsp;&nbsp;&nbsp;Spaces: 4&nbsp;&nbsp;&nbsp;&nbsp;UTF-8&nbsp;&nbsp;&nbsp;&nbsp;CRLF&nbsp;&nbsp;&nbsp;&nbsp;{} HTML&nbsp;&nbsp;&nbsp;&nbsp;&#8856; Port : 5500&nbsp;&nbsp;&nbsp;&nbsp;&#10003;&#10003; Prettier&nbsp;&nbsp;&nbsp;&nbsp;&#9826;</div>
</body></html>
